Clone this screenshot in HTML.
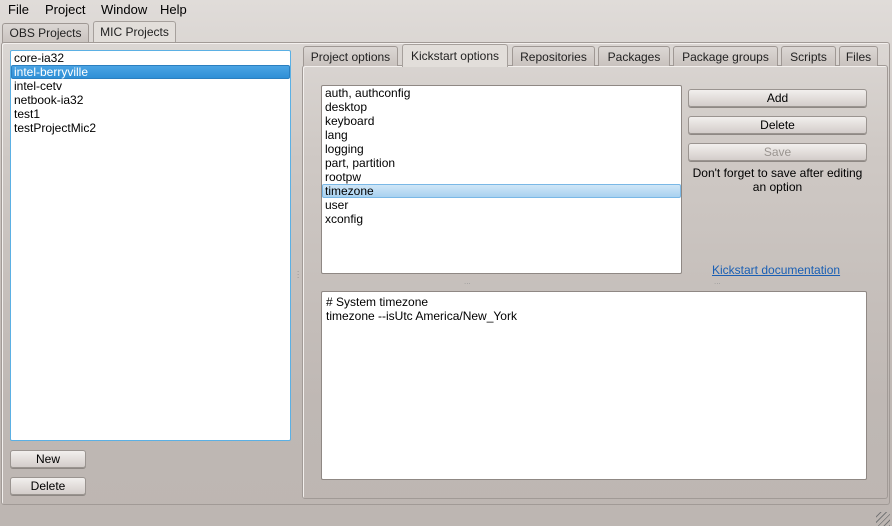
<!DOCTYPE html><html><head><style>
*{margin:0;padding:0;box-sizing:border-box}
body{width:892px;height:526px;position:relative;overflow:hidden;font-family:"Liberation Sans",sans-serif;font-size:12px;color:#000;background:linear-gradient(#e0dcd9 0,#cfc9c5 150px,#bfb8b4 400px,#bdb6b2 526px)}
.a{position:absolute}
.menu span{position:absolute;top:2px;font-size:13px}
.tab{position:absolute;border:1px solid #9f9894;border-bottom:none;border-radius:3px 3px 0 0;background:linear-gradient(#dcd7d4,#c9c2be);text-align:center;font-size:12px;color:#222}
.tab.sel{background:#e2deda;border-color:#a6a09c}
.pane{position:absolute;border:1px solid #a19a96;border-radius:3px;box-shadow:inset 1px 1px 0 #f3f0ee}
.list{position:absolute;background:#fff;border:1px solid #8f8884;border-radius:2px}
.list div{height:14px;line-height:14px;padding-left:3px;white-space:nowrap}
.list .s{background:linear-gradient(#cfe6f7,#a8d1f0);border:1px solid #7ab8e6;border-radius:2px;line-height:12px;padding-left:2px}
.btn{position:absolute;border:1px solid #9a9490;border-radius:3px;background:linear-gradient(#f2efed,#d3cdca);text-align:center;line-height:16px;font-size:12px;box-shadow:0 1px 0 #8e8884}
</style></head><body>
<div class="menu"><span style="left:8px">File</span><span style="left:45px">Project</span><span style="left:101px">Window</span><span style="left:160px">Help</span></div>
<div class="tab" style="left:2px;top:23px;width:87px;height:20px;line-height:19px">OBS Projects</div>
<div class="tab sel" style="left:93px;top:21px;width:83px;height:22px;line-height:21px">MIC Projects</div>
<div class="pane" style="left:1px;top:42px;width:889px;height:463px;border-color:#a19a96"></div>
<div class="list" style="left:10px;top:50px;width:281px;height:391px;border:1px solid #5bb0e4">
<div>core-ia32</div><div class="s" style="color:#fff;background:linear-gradient(#4aa4e4,#2f8fd6);border-color:#2b7fc0">intel-berryville</div><div>intel-cetv</div><div>netbook-ia32</div><div>test1</div><div>testProjectMic2</div></div>
<div class="btn" style="left:10px;top:450px;width:76px;height:18px">New</div>
<div class="btn" style="left:10px;top:477px;width:76px;height:18px">Delete</div>
<div class="a" style="left:297px;top:268px;color:#888;font-size:8px;line-height:3px">.<br>.<br>.</div>
<div class="pane" style="left:302px;top:65px;width:586px;height:434px"></div>
<div class="tab" style="left:303px;top:46px;width:95px;height:20px;line-height:20px">Project options</div>
<div class="tab sel" style="left:402px;top:44px;width:106px;height:23px;line-height:22px;border-bottom:none">Kickstart options</div>
<div class="tab" style="left:512px;top:46px;width:83px;height:20px;line-height:20px">Repositories</div>
<div class="tab" style="left:598px;top:46px;width:72px;height:20px;line-height:20px">Packages</div>
<div class="tab" style="left:673px;top:46px;width:105px;height:20px;line-height:20px">Package groups</div>
<div class="tab" style="left:781px;top:46px;width:55px;height:20px;line-height:20px">Scripts</div>
<div class="tab" style="left:839px;top:46px;width:39px;height:20px;line-height:20px">Files</div>
<div class="list" style="left:321px;top:85px;width:361px;height:189px">
<div>auth, authconfig</div><div>desktop</div><div>keyboard</div><div>lang</div><div>logging</div><div>part, partition</div><div>rootpw</div><div class="s">timezone</div><div>user</div><div>xconfig</div></div>
<div class="btn" style="left:688px;top:89px;width:179px;height:18px">Add</div>
<div class="btn" style="left:688px;top:116px;width:179px;height:18px">Delete</div>
<div class="btn" style="left:688px;top:143px;width:179px;height:18px;color:#9a9490">Save</div>
<div class="a" style="left:688px;top:166px;width:179px;text-align:center;line-height:14px">Don't forget to save after editing an option</div>
<div class="a" style="left:712px;top:263px;color:#1a5fb4;text-decoration:underline">Kickstart documentation</div>
<div class="a" style="left:464px;top:277px;color:#999;font-size:8px">...</div>
<div class="a" style="left:714px;top:277px;color:#999;font-size:8px">...</div>
<div class="list" style="left:321px;top:291px;width:546px;height:189px;padding:3px 1px">
<div>#&nbsp;System timezone</div><div>timezone --isUtc America/New_York</div></div>
<div class="a" style="left:876px;top:512px;width:14px;height:14px;background:repeating-linear-gradient(135deg,transparent 0 3px,#777 3px 4px)"></div>
</body></html>
